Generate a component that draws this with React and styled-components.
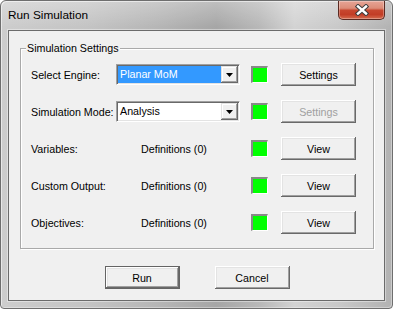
import React from "react";
import styled, { createGlobalStyle } from "styled-components";

const GlobalStyle = createGlobalStyle`
  html, body { margin: 0; padding: 0; background: #ffffff; }
  * { box-sizing: border-box; }
`;

const Window = styled.div`
  width: 393px;
  height: 309px;
  display: flex;
  flex-direction: column;
  padding: 0 7px 7px;
  border: 1px solid #6e6e6e;
  border-radius: 6px 6px 4px 4px;
  background:
    linear-gradient(180deg, rgba(255,255,255,0.28) 0px, rgba(255,255,255,0) 26px),
    linear-gradient(90deg, #cdcdcd 0%, #c4c4c4 22%, #b6b6b6 40%, #a6a6a6 55%, #b8b8b8 66%, #d3d3d3 75%, #c9c9c9 86%, #b2b2b2 100%);
  box-shadow: inset 1px 1px 0 rgba(255,255,255,0.55), inset -1px -1px 0 rgba(255,255,255,0.35);
  font-family: "Liberation Sans", Arial, sans-serif;
  font-size: 10.7px;
  color: #000;
`;

const TitleBar = styled.div`
  height: 29px;
  display: flex;
  align-items: flex-start;
  justify-content: space-between;
`;

const Title = styled.span`
  font-family: "Liberation Sans", Arial, sans-serif;
  font-size: 11.8px;
  line-height: 29px;
  color: #000;
`;

const CloseButton = styled.div`
  width: 47px;
  height: 19px;
  display: flex;
  align-items: center;
  justify-content: center;
  border: 1px solid #5a2a22;
  border-top: none;
  border-radius: 0 0 5px 5px;
  background: linear-gradient(180deg, #e6a596 0%, #dc8c78 40%, #c7472f 52%, #c23d26 75%, #d46b4e 100%);
  box-shadow: inset 0 0 0 1px rgba(255,255,255,0.3);
`;

const Client = styled.div`
  flex: 1;
  display: flex;
  flex-direction: column;
  background: #f0f0f0;
  border: 1px solid #6b6b6b;
  padding: 11px 10px 10px 11px;
  box-shadow: 0 0 0 1px rgba(255,255,255,0.4);
`;

const Group = styled.fieldset`
  margin: 0;
  padding: 0;
  min-inline-size: auto;
  border: 1px solid #a9a9a9;
  box-shadow: 1px 1px 0 #ffffff, inset 1px 1px 0 #ffffff;
`;

const Legend = styled.legend`
  margin-left: 5px;
  padding: 0 1px;
  font-size: 10.7px;
  line-height: 13px;
  background: #f0f0f0;
`;

const Grid = styled.div`
  display: grid;
  grid-template-columns: 85px 135px 30px 75px;
  grid-auto-rows: 23px;
  row-gap: 14px;
  align-items: center;
  padding: 8px 17px 14px 10px;
`;

const Label = styled.span`
  white-space: nowrap;
`;

const ValueText = styled.span`
  padding-left: 25px;
  white-space: nowrap;
`;

const Combo = styled.div`
  width: 124px;
  height: 21px;
  display: flex;
  padding: 1px;
  background: #ffffff;
  border: 1px solid;
  border-color: #a0a0a0 #ffffff #ffffff #a0a0a0;
  box-shadow: inset 1px 1px 0 #696969, inset -1px -1px 0 #e3e3e3;
`;

const ComboValue = styled.div`
  flex: 1;
  height: 17px;
  line-height: 17px;
  padding-left: 2px;
  background: ${(p) => (p.$selected ? "#3399ff" : "#ffffff")};
  color: ${(p) => (p.$selected ? "#ffffff" : "#000000")};
  white-space: nowrap;
  overflow: hidden;
`;

const ComboArrow = styled.div`
  width: 17px;
  height: 17px;
  display: flex;
  align-items: center;
  justify-content: center;
  background: #f0f0f0;
  box-shadow: inset -1px -1px 0 #696969, inset 1px 1px 0 #e3e3e3, inset -2px -2px 0 #a0a0a0, inset 2px 2px 0 #ffffff;
`;

const Indicator = styled.div`
  width: 17px;
  height: 17px;
  background: #00ff00;
  border-style: solid;
  border-width: 2px 1px 1px 2px;
  border-color: #888888 #ffffff #ffffff #888888;
`;

const Button = styled.button`
  width: 75px;
  height: 23px;
  padding: 0;
  margin: 0;
  font-family: "Liberation Sans", Arial, sans-serif;
  font-size: 10.7px;
  color: ${(p) => (p.disabled ? "#a0a0a0" : "#000000")};
  background: #f0f0f0;
  border: ${(p) => (p.$default ? "1px solid #646464" : "none")};
  box-shadow: inset -1px -1px 0 #696969, inset 1px 1px 0 #ffffff, inset -2px -2px 0 #a0a0a0, inset 2px 2px 0 #e3e3e3;
  cursor: default;
`;

const ButtonRow = styled.div`
  display: flex;
  justify-content: center;
  gap: 35px;
  margin-top: 17px;
`;

const Arrow = () => (
  <svg width="7" height="4" viewBox="0 0 7 4">
    <polygon points="0,0 7,0 3.5,4" fill="#000" />
  </svg>
);

const CloseX = () => (
  <svg width="14" height="12" viewBox="0 0 14 12">
    <g strokeLinecap="square">
      <path d="M3 2.5 L11 9.5 M11 2.5 L3 9.5" stroke="#3c3c3c" strokeWidth="4.4" />
      <path d="M3 2.5 L11 9.5 M11 2.5 L3 9.5" stroke="#ffffff" strokeWidth="2.4" />
    </g>
  </svg>
);

const rows = [
  { label: "Select Engine:", combo: "Planar MoM", selected: true, button: "Settings" },
  { label: "Simulation Mode:", combo: "Analysis", button: "Settings", disabled: true },
  { label: "Variables:", text: "Definitions (0)", button: "View" },
  { label: "Custom Output:", text: "Definitions (0)", button: "View" },
  { label: "Objectives:", text: "Definitions (0)", button: "View" },
];

export default function App() {
  return (
    <>
      <GlobalStyle />
      <Window>
        <TitleBar>
          <Title>Run Simulation</Title>
          <CloseButton>
            <CloseX />
          </CloseButton>
        </TitleBar>
        <Client>
          <Group>
            <Legend>Simulation Settings</Legend>
            <Grid>
              {rows.map((r) => (
                <React.Fragment key={r.label}>
                  <Label>{r.label}</Label>
                  {r.combo ? (
                    <Combo>
                      <ComboValue $selected={r.selected}>{r.combo}</ComboValue>
                      <ComboArrow>
                        <Arrow />
                      </ComboArrow>
                    </Combo>
                  ) : (
                    <ValueText>{r.text}</ValueText>
                  )}
                  <Indicator />
                  <Button disabled={r.disabled}>{r.button}</Button>
                </React.Fragment>
              ))}
            </Grid>
          </Group>
          <ButtonRow>
            <Button $default>Run</Button>
            <Button>Cancel</Button>
          </ButtonRow>
        </Client>
      </Window>
    </>
  );
}
